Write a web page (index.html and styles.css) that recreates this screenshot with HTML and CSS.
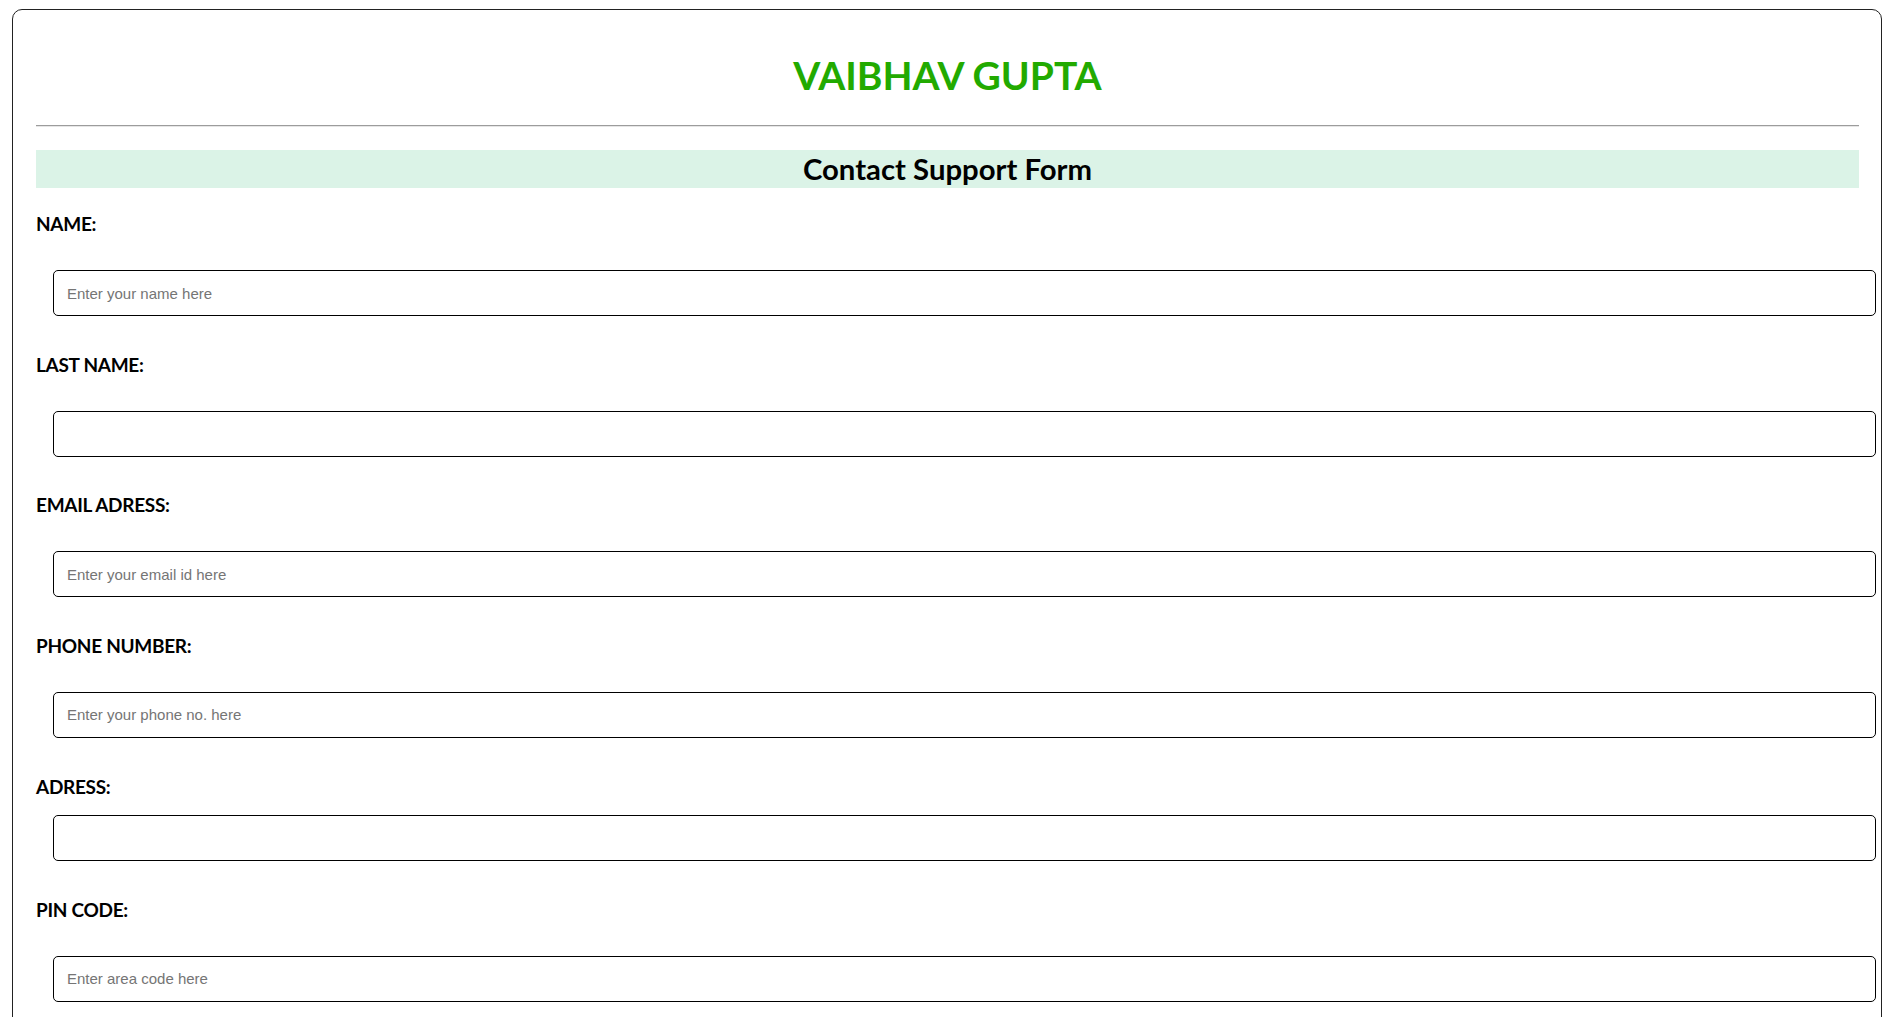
FILE: index.html
```html
<!DOCTYPE html>
<html lang="en">
<head>
<meta charset="utf-8">
<title>Contact Support Form</title>
<link rel="stylesheet" href="styles.css">
</head>
<body>
<div class="card">
  <h1 class="title">VAIBHAV GUPTA</h1>
  <hr class="rule">
  <h2 class="band">Contact Support Form</h2>
  <form class="form">
    <label class="label" for="fname">NAME:</label>
    <input class="field" id="fname" type="text" placeholder="Enter your name here">
    <label class="label" for="lname">LAST NAME:</label>
    <input class="field" id="lname" type="text">
    <label class="label" for="email">EMAIL ADRESS:</label>
    <input class="field" id="email" type="email" placeholder="Enter your email id here">
    <label class="label" for="phone">PHONE NUMBER:</label>
    <input class="field" id="phone" type="tel" placeholder="Enter your phone no. here">
    <label class="label" for="addr">ADRESS:</label>
    <input class="field field-tight" id="addr" type="text">
    <label class="label" for="pin">PIN CODE:</label>
    <input class="field" id="pin" type="text" placeholder="Enter area code here">
  </form>
</div>
</body>
</html>
```
FILE: styles.css
```css
html, body {
  margin: 0;
  padding: 0;
  background: #ffffff;
}

body {
  font-family: "Comic Sans MS", Lato, "DejaVu Sans", sans-serif;
}

.card {
  margin: 9px 14px 0 12px;
  padding: 0 22px 20px 23px;
  border: 1px solid #222;
  border-radius: 10px;
}

.title {
  margin: 42px 0 0;
  font-size: 39px;
  line-height: 47px;
  font-weight: 700;
  text-align: center;
  color: #22aa00;
}

.rule {
  margin: 26px 0 23px;
  height: 0;
  border: none;
  border-top: 1px solid #9c9c9c;
  border-bottom: 1px solid #e6e6e6;
}

.band {
  margin: 0;
  height: 38px;
  background: #dbf3e7;
  font-size: 29.3px;
  line-height: 38px;
  font-weight: 700;
  text-align: center;
  color: #000;
}

.form {
  display: flex;
  flex-direction: column;
  padding-top: 24px;
}

.label {
  display: block;
  margin: 0;
  font-size: 19px;
  line-height: 24px;
  letter-spacing: -0.3px;
  font-weight: 700;
  color: #000;
}

.field {
  display: block;
  box-sizing: border-box;
  width: 100%;
  height: 46px;
  margin: 34px 0 36.67px 17px;
  padding: 0 13px;
  border: 1px solid #000;
  border-radius: 5px;
  background: #fff;
  font-family: "Liberation Sans", Arial, sans-serif;
  font-size: 15px;
  color: #000;
  outline: none;
}

.field-tight {
  margin-top: 16.3px;
}

.field::placeholder {
  color: #757575;
}
```
